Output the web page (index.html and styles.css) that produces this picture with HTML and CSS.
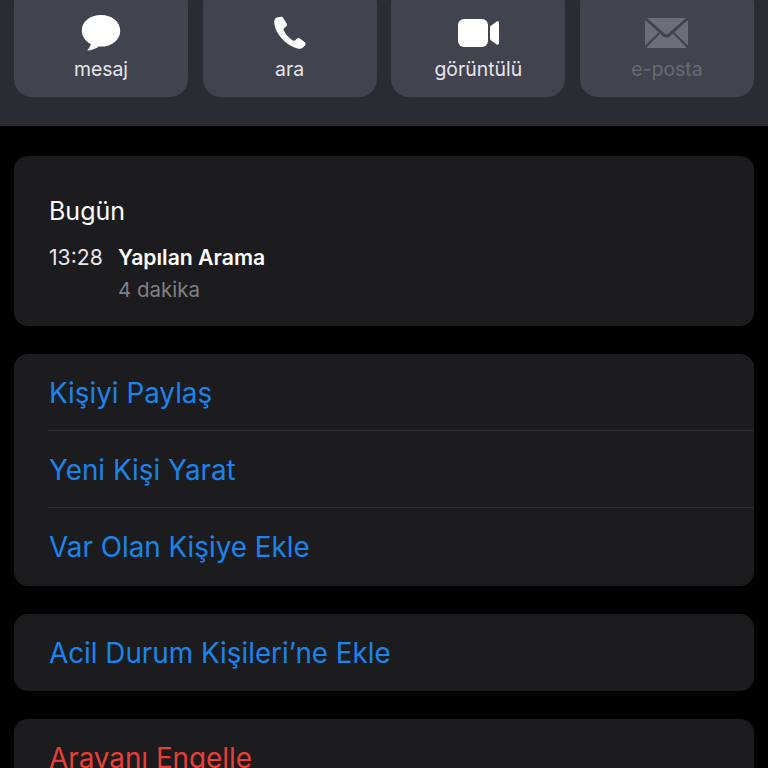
FILE: index.html
```html
<!DOCTYPE html>
<html lang="tr">
<head>
    <meta charset="UTF-8">
    <meta name="viewport" content="width=device-width, initial-scale=1.0">
    <title>Arama Bilgisi</title>
    <link rel="stylesheet" href="styles.css">
</head>
<body>
    <div class="screen">
        <div class="actions">
            <div class="action">
                <svg class="icon" width="40" height="38" viewBox="0 0 40 38">
                    <path fill="#fff" d="M20 1C9 1 .8 7.6.8 16.400c0 5.800 3.600 10.800 9 13.500-.4 2.200-1.700 4.200-3 5.500-.5.600-.1 1.200.6 1.100 3.700-.4 7.800-2 10.300-4 .7.100 1.500.1 2.300.1 11 0 19.200-7 19.200-15.700C39.200 7.600 31 1 20 1z"/>
                </svg>
                <span class="action-label">mesaj</span>
            </div>
            <div class="action">
                <svg class="icon" width="34" height="34" viewBox="0 0 34 34">
                    <path fill="#fff" d="M3.500 1.500C1.800 2.800 1 4.700 1.200 7c.6 5.800 3.600 11.300 8 16 4.400 4.600 9.700 8 15.200 9.500 2.100.5 4.200.1 5.800-1.300l1.700-1.600c1-1 1-2.500-.1-3.400l-4.800-3.600c-1-.7-2.200-.7-3.100.1l-2 1.700c-.6.500-1.300.5-2 .1-2-1.200-4-3-5.600-4.800-1.500-1.700-2.800-3.600-3.600-5.500-.3-.7-.2-1.400.4-1.900l2-1.800c.9-.8 1.100-2 .5-3.100L10.300 2C9.600.8 8.100.4 7 1z"/>
                </svg>
                <span class="action-label">ara</span>
            </div>
            <div class="action">
                <svg class="icon" width="43" height="30" viewBox="0 0 43 30">
                    <rect fill="#fff" x="1" y="1" width="30" height="28" rx="6"/>
                    <path fill="#fff" d="M33 9.500c0-.7.300-1.300.8-1.700l6-4.200c1-.7 2.200 0 2.200 1.100v20.600c0 1.100-1.200 1.800-2.200 1.100l-6-4.200c-.5-.4-.8-1-.8-1.700z"/>
                </svg>
                <span class="action-label">görüntülü</span>
            </div>
            <div class="action action-off">
                <svg class="icon" width="43" height="30" viewBox="0 0 43 30">
                    <path fill="#6c6e77" d="M2 0h39L23.500 15.500c-1.200 1-2.800 1-4 0z"/>
                    <path fill="#6c6e77" d="M0 2l13.800 12.200L0 27.500zM43 2L29.200 14.200 43 27.500zM15 15.500l3 2.700c2 1.700 5 1.700 7 0l3-2.700L41.800 30H1.200z"/>
                </svg>
                <span class="action-label">e-posta</span>
            </div>
        </div>

        <div class="card recents">
            <div class="day">Bugün</div>
            <div class="call">
                <span class="call-time">13:28</span>
                <div>
                    <div class="call-type">Yapılan Arama</div>
                    <div class="call-length">4 dakika</div>
                </div>
            </div>
        </div>

        <div class="card options">
            <div class="row">Kişiyi Paylaş</div>
            <div class="row">Yeni Kişi Yarat</div>
            <div class="row">Var Olan Kişiye Ekle</div>
        </div>

        <div class="card">
            <div class="row">Acil Durum Kişileri’ne Ekle</div>
        </div>

        <div class="card">
            <div class="row row-danger">Arayanı Engelle</div>
        </div>
    </div>
</body>
</html>
```

FILE: styles.css
```css
html, body {
    margin: 0;
    height: 100%;
    background-color: #000;
    overflow: hidden;
}
body {
    font-family: Inter, "Noto Sans", sans-serif;
    color: #fff;
}
.screen {
    height: 768px;
    overflow: hidden;
}
.actions {
    display: grid;
    grid-template-columns: repeat(4, 174px);
    justify-content: space-between;
    align-content: end;
    height: 126px;
    box-sizing: border-box;
    padding: 0 14px 29px;
    background-color: #2a2c33;
}
.action {
    height: 111px;
    box-sizing: border-box;
    padding-top: 28px;
    display: flex;
    flex-direction: column;
    align-items: center;
    background-color: #41434e;
    border-radius: 18px;
}
.icon {
    height: 38px;
    margin-bottom: 6px;
    flex: none;
}
.action-label {
    font-size: 19.4px;
    line-height: 22px;
    color: #e6e6ea;
}
.action-off .action-label {
    color: #686a73;
}
.card {
    margin: 28px 14px 0;
    background-color: #1c1c1e;
    border-radius: 14px;
    overflow: hidden;
}
.actions + .card {
    margin-top: 30px;
}
.recents {
    height: 170px;
    box-sizing: border-box;
    padding: 39px 35px 0;
}
.day {
    font-size: 25px;
    line-height: 32px;
}
.call {
    display: flex;
    gap: 14px;
    margin-top: 14px;
    font-size: 21.2px;
    line-height: 32px;
}
.call-time {
    width: 55px;
    color: #e6e6ea;
}
.call-type {
    font-weight: 600;
}
.call-length {
    color: #7f7f84;
    font-size: 20.5px;
    margin-top: 1px;
}
.row {
    height: 77px;
    box-sizing: border-box;
    margin-left: 34px;
    padding: 22px 0 0 1px;
    font-size: 27.8px;
    line-height: 34px;
    color: #1a84ec;
    border-top: 1px solid #2f2f32;
}
.row:first-child {
    border-top: 0;
}
.options .row:first-child {
    height: 76px;
}
.options .row:last-child {
    height: 79px;
}
.row-danger {
    color: #e83e36;
}
```
